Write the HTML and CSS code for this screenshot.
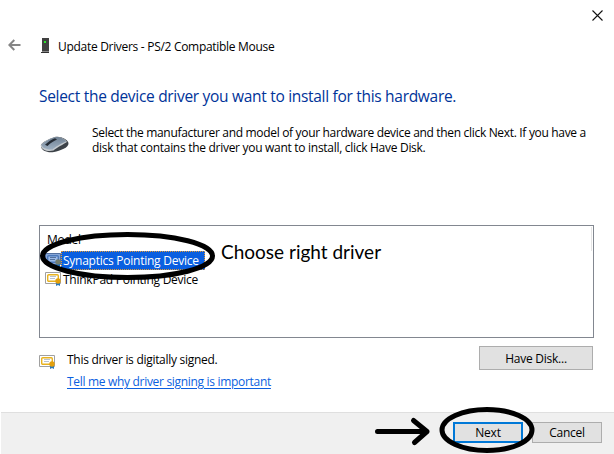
FILE: index.html
```html
<!DOCTYPE html>
<html lang="en">
<head>
<meta charset="utf-8">
<title>Update Drivers</title>
<link rel="stylesheet" href="styles.css">
</head>
<body>
<div class="window">
  <header class="caption">
    <svg class="close" width="11" height="11" viewBox="0 0 11 11"><path d="M.5 .5l10 10M10.5 .5l-10 10" stroke="#111" stroke-width="1.1" fill="none"/></svg>
  </header>
  <div class="titlebar">
    <svg class="back" width="13" height="12" viewBox="0 0 13 12"><path d="M12.5 6H1.5M6.3 1L1.3 6l5 5" stroke="#858585" stroke-width="2" fill="none"/></svg>
    <svg class="tower" width="8" height="15" viewBox="0 0 8 15"><path d="M1 0h7v13H1z" fill="#404040"/><path d="M0 14h8v1H0z" fill="#303030"/><path d="M1 13h7v1H1z" fill="#888"/><path d="M3 3h2v2H3z" fill="#2be52b"/></svg>
    <span class="title">Update Drivers - PS/2 Compatible Mouse</span>
  </div>
  <h1 class="heading">Select the device driver you want to install for this hardware.</h1>
  <section class="intro">
    <svg class="mouse" width="29" height="17" viewBox="0 0 29 17">
      <defs><linearGradient id="body" x1="0" y1="0" x2="0" y2="1"><stop offset="0" stop-color="#6f8092"/><stop offset="1" stop-color="#9eb0c2"/></linearGradient></defs>
      <path d="M1 10C0 7 12 1 17 .7C22 .5 28 4 28.5 7C29 12 20 14.500 14 16C8 17 1 15 1 10z" fill="#3c4248"/>
      <path d="M.8 9.500C2 6 12 1 17 1C22 1 26 4 27 6C24 8 16 12 13.500 14.500C8 16 1 14 .8 9.500z" fill="#c4c9cd"/>
      <path d="M1.500 9C4 5.500 13 1 17 1C21 1 25 3.500 26 5.500C22 7 15 11 12.500 13.500C8 14 2 12 1.500 9z" fill="url(#body)"/>
      <path d="M5 8.800C8 6 12 3 15 2.300l2 1.300C14 5 10 7.500 7.500 10z" fill="#252c35"/>
    </svg>
    <p class="copy"><span class="line1">Select the manufacturer and model of your hardware device and then click Next. If you have a</span><br><span class="line2">disk that contains the driver you want to install, click Have Disk.</span></p>
  </section>
  <section class="list">
    <div class="column">Model</div>
    <div class="row selected">
      <svg class="cert" width="16" height="15" viewBox="0 0 16 15"><path d="M.5 .5h15v11H.5z" fill="#87a6d6" stroke="#526f9f"/><rect x="2.700" y="2.700" width="10.600" height="6.600" rx="1" fill="#9cbae8" stroke="#4b78ba" stroke-width="1.400"/><path d="M5 4.500h6M5 6.500h5" stroke="#55729d"/><path d="M11 10h4v4l-2-1-2 1z" fill="#1769bd"/><circle cx="13" cy="9" r="2.700" fill="#737d70"/></svg>
      <span class="name">Synaptics Pointing Device</span>
    </div>
    <div class="row">
      <svg class="cert" width="16" height="15" viewBox="0 0 16 15"><path d="M.5 .5h15v11H.5z" fill="#fff" stroke="#a0a0a0"/><rect x="2.700" y="2.700" width="10.600" height="6.600" rx="1" fill="#fff" stroke="#e8b21e" stroke-width="1.400"/><path d="M5 4.500h6M5 6.500h5" stroke="#b9c2ce"/><path d="M11 10h4v4l-2-1-2 1z" fill="#2878bd"/><circle cx="13" cy="9" r="2.700" fill="#e3a00d"/></svg>
      <span class="name">ThinkPad Pointing Device</span>
    </div>
    <div class="divider"></div>
    <div class="note">Choose right driver</div>
  </section>
  <section class="signing">
    <svg class="cert" width="16" height="15" viewBox="0 0 16 15"><path d="M.5 .5h15v11H.5z" fill="#fff" stroke="#a0a0a0"/><rect x="2.700" y="2.700" width="10.600" height="6.600" rx="1" fill="#fff" stroke="#e8b21e" stroke-width="1.400"/><path d="M5 4.500h6M5 6.500h5" stroke="#b9c2ce"/><path d="M11 10h4v4l-2-1-2 1z" fill="#2878bd"/><circle cx="13" cy="9" r="2.700" fill="#e3a00d"/></svg>
    <div class="status"><span class="signed">This driver is digitally signed.</span><br><a class="link">Tell me why driver signing is important</a></div>
    <button class="button disk">Have Disk...</button>
  </section>
  <footer class="footer">
    <button class="button next">Next</button>
    <button class="button cancel">Cancel</button>
  </footer>
  <svg class="marks" width="614" height="454" viewBox="0 0 614 454" fill="none" stroke="#000" stroke-width="5" stroke-linecap="round" stroke-linejoin="round">
    <ellipse cx="127.500" cy="256" rx="85" ry="21.500"/>
    <ellipse cx="487" cy="430" rx="45" ry="20.500"/>
    <path d="M377.500 431.500H427M413.500 420.500L427 431.500L414.500 442.500"/>
  </svg>
</div>
</body>
</html>
```
FILE: styles.css
```css
* { box-sizing: border-box; }
body { margin: 0; background: #fff; }
.window {
  position: relative;
  display: flex;
  flex-direction: column;
  width: 614px;
  height: 454px;
  overflow: hidden;
  color: #000;
  font: 12px/15px "Open Sans", "Noto Sans", sans-serif;
  letter-spacing: -0.29px;
  white-space: nowrap;
}
svg { display: block; flex: none; }
.caption { display: flex; justify-content: flex-end; height: 37px; padding: 10px 11px 0 0; }
.titlebar { display: flex; align-items: center; height: 17px; padding-left: 8px; }
.back { position: relative; top: -1px; }
.tower { margin-left: 20px; }
.title { margin-left: 9px; padding-top: 2px; letter-spacing: -0.3px; }
.heading { margin: 31px 0 0 39px; height: 22px; font-size: 15.500px; line-height: 22px; font-weight: 400; letter-spacing: -0.3px; color: #003399; }
.intro { display: flex; height: 118px; padding: 17px 0 0 40px; }
.mouse { margin-top: 12px; }
.copy { margin: 1px 0 0 23px; }
.line1 { letter-spacing: -0.32px; }
.list { position: relative; width: 555px; height: 113px; margin-left: 39px; padding: 5px; border: 1px solid #828790; }
.column { height: 20px; padding-left: 2px; line-height: 17px; }
.row { display: flex; align-items: center; height: 19px; }
.row .name { width: 144px; height: 19px; padding-left: 2px; line-height: 20px; letter-spacing: -0.25px; }
.row.selected .name { background: #0a5fe0; color: #fff; outline: 1px dotted #e29a35; outline-offset: -1px; }
.divider { position: absolute; right: 1px; top: 1px; width: 1px; height: 24px; background: #e5e5e5; }
.note { position: absolute; left: 181px; top: 14px; font: 19px/24px Lato, sans-serif; letter-spacing: 0; }
.signing { display: flex; height: 74px; padding: 8px 21px 0 39px; }
.signing .cert { margin-top: 9px; }
.status { margin-left: 12px; padding-top: 3px; line-height: 22px; }
.link { color: #0b5fe0; text-decoration: underline; text-underline-offset: 2px; letter-spacing: -0.31px; }
.button { padding: 0; border: 1px solid #adadad; border-radius: 0; background: #e1e1e1; color: #000; font: inherit; letter-spacing: -0.25px; line-height: 17px; height: 21px; }
.disk { width: 114px; height: 24px; margin-left: auto; }
.footer { display: flex; justify-content: flex-end; gap: 9px; height: 42px; margin-left: 1px; padding: 9px 12px 0 0; border-top: 1px solid #dfdfdf; background: #f0f0f0; }
.next { width: 70px; border: 2px solid #0078d7; }
.cancel { width: 70px; }
.marks { position: absolute; inset: 0; }
```
